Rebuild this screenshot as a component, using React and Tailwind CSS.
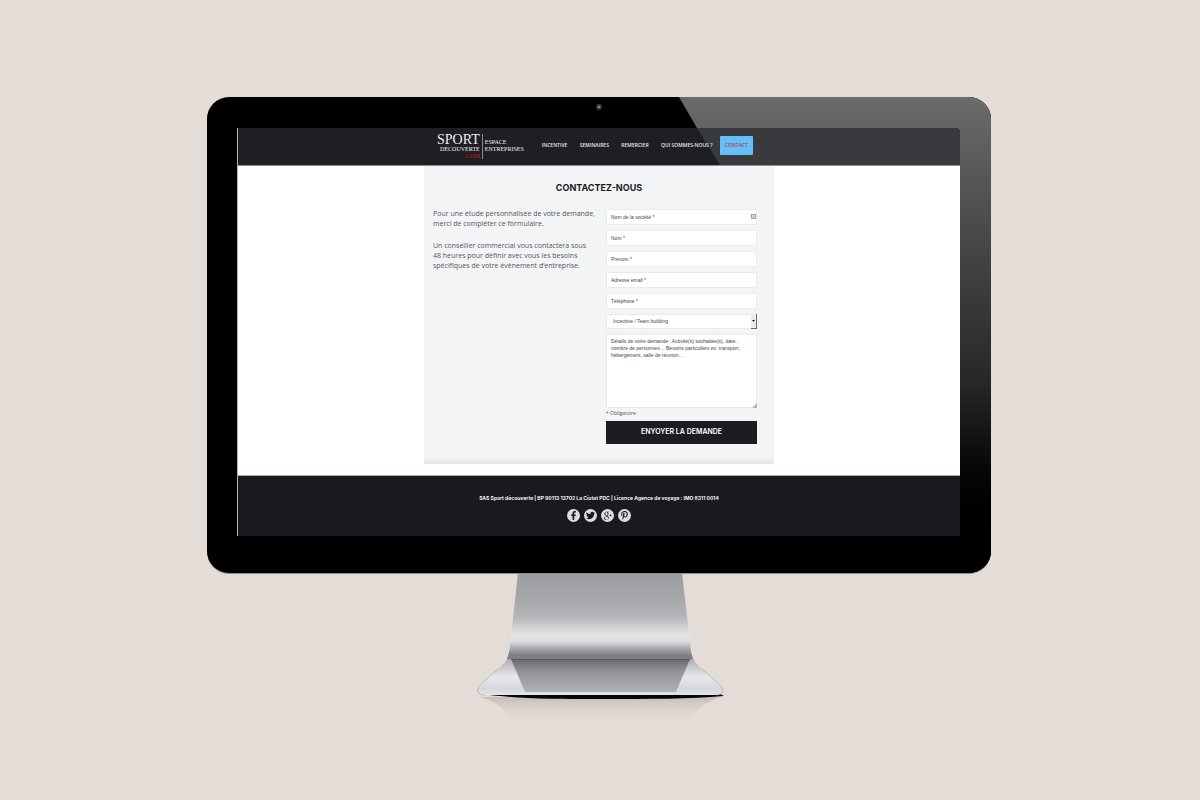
import { FaFacebookF, FaTwitter, FaPinterestP } from "react-icons/fa";
import { TiSocialGooglePlus } from "react-icons/ti";

const links = ["INCENTIVE", "SEMINAIRES", "REMERCIER", "QUI SOMMES-NOUS ?"];

const fields = [
  { id: "societe", label: "Nom de la société *", type: "text" },
  { id: "nom", label: "Nom *", type: "text" },
  { id: "prenom", label: "Prénom *", type: "text" },
  { id: "email", label: "Adresse email *", type: "email" },
  { id: "telephone", label: "Téléphone *", type: "tel" },
];

const socials = [
  { name: "Facebook", Icon: FaFacebookF, size: "size-[9px]" },
  { name: "Twitter", Icon: FaTwitter, size: "size-[9px]" },
  { name: "Google+", Icon: TiSocialGooglePlus, size: "size-[13px]" },
  { name: "Pinterest", Icon: FaPinterestP, size: "size-[9px]" },
];

function Logo() {
  return (
    <a href="#accueil" className="mt-0.5 flex items-start font-['Liberation_Serif',serif] text-[6px] leading-[7px] text-[#f0f0f2]">
      <span className="flex flex-col items-end border-r border-[#8b8c8f] pr-0.5">
        <span className="text-[14px] leading-[12px]">SPORT</span>
        <span>DECOUVERTE</span>
        <span className="leading-[6px] text-[#d4101c]">.COM</span>
      </span>
      <span className="flex flex-col pt-[5px] pl-0.5">
        <span>ESPACE</span>
        <span>ENTREPRISES</span>
      </span>
    </a>
  );
}

function Header() {
  return (
    <header className="relative flex h-[38px] items-center justify-center border-b border-[#8e8e90] bg-[#1e1f23] pb-0.5">
      <div className="absolute inset-y-0 right-0 w-[263px] bg-white/12 [clip-path:polygon(0_0,100%_0,100%_100%,23px_100%)]" />
      <div className="relative flex w-[350px] items-center gap-[18px] pr-[21px] pl-[13px]">
        <Logo />
        <nav className="flex flex-1 items-center justify-between text-[5px] font-semibold whitespace-nowrap text-[#e8e8ea]">
          {links.map((l) => (
            <a key={l} href="#page">{l}</a>
          ))}
          <a href="#contact" className="-ml-[5px] rounded-[1px] bg-[#64c0fa] px-[5px] leading-[19px] text-[#d22a48]">
            CONTACT
          </a>
        </nav>
      </div>
    </header>
  );
}

const box =
  "block w-full rounded-[1px] border border-[#e9eaec] bg-white px-1 font-['Liberation_Sans',Arial,sans-serif] text-[5px] text-[#444] outline-none placeholder:text-[#444] placeholder:opacity-100";

function ContactForm() {
  return (
    <form className="flex w-[151px] flex-col gap-[5px]">
      {fields.map((f, i) => (
        <div key={f.id} className="relative">
          <input id={f.id} type={f.type} placeholder={f.label} aria-label={f.label} className={`${box} h-4`} />
          {i === 0 && (
            <svg viewBox="0 0 10 10" className="absolute top-[5px] right-px size-[5px]">
              <rect x="1" y="1" width="8" height="8" fill="#eee" stroke="#888" strokeWidth="1.6" />
              <path d="M3 4h4M3 6.200h4" stroke="#888" strokeWidth="1.200" />
            </svg>
          )}
        </div>
      ))}
      <div className="relative">
        <select aria-label="Type de demande" className={`${box} h-[15px] appearance-none pl-1.5`}>
          <option>Incentive / Team building</option>
        </select>
        <span className="pointer-events-none absolute inset-y-0 right-0 flex w-1.5 items-center justify-center border-r border-b border-[#6b6b6b] bg-[#ececec]">
          <svg viewBox="0 0 6 4" className="h-[2px] w-[3px]">
            <path d="M0 0h6L3 4z" fill="#222" />
          </svg>
        </span>
      </div>
      <div className="relative">
        <textarea
          aria-label="Détails de votre demande"
          placeholder="Détails de votre demande : Activité(s) souhaitée(s), date, nombre de personnes… Besoins particuliers ex: transport, hébergement, salle de réunion…"
          className={`${box} h-[74px] resize-none py-[3px] leading-[7px]`}
        />
        <svg viewBox="0 0 5 5" className="pointer-events-none absolute right-0 bottom-0 size-[5px]">
          <path d="M5 0v5H0z" fill="#b4b4b6" />
        </svg>
      </div>
      <p className="-mt-[3px] text-[5px] leading-[7px] text-[#555]">* Obligatoire</p>
      <button type="submit" className="-mt-px h-[23px] bg-[#1c1d21] font-['Inter',sans-serif] text-[7px] font-semibold text-white">
        ENYOYER LA DEMANDE
      </button>
    </form>
  );
}

function Footer() {
  return (
    <footer className="flex flex-col items-center gap-1.5 border-t border-[#a5a5a5] bg-[#191a1d] pt-[18px] pb-[14px]">
      <p className="font-['Inter',sans-serif] text-[5px] leading-[9px] font-bold whitespace-nowrap text-[#f2f2f2]">
        SAS Sport découverte | BP 90113 13702 La Ciotat PDC | Licence Agence de voyage : IMO 8311 0014
      </p>
      <div className="flex gap-1">
        {socials.map(({ name, Icon, size }) => (
          <a key={name} href="#social" aria-label={name} className="flex size-[13px] items-center justify-center rounded-full bg-[#dededd] text-[#191a1d]">
            <Icon className={size} />
          </a>
        ))}
      </div>
    </footer>
  );
}

function Screen() {
  return (
    <div className="relative overflow-hidden rounded-tr-[2px] border-l border-[#b5b5b5] bg-white">
      <Header />
      <main className="mx-auto w-[350px] bg-[#f3f4f6] bg-linear-to-t from-[#e4e5e7] to-[#f3f4f6] to-[8px] px-[9px] pt-4 pb-5">
        <h1 className="text-center font-['Inter',sans-serif] text-[9px] leading-3 font-bold text-[#1b1c20]">
          CONTACTEZ-NOUS
        </h1>
        <div className="flex justify-between pt-[15px] pr-2">
          <div className="flex flex-col gap-3 text-[7px] leading-[10px] whitespace-nowrap text-[#55565a]">
            <p>
              Pour une étude personnalisée de votre demande,
              <br />
              merci de compléter ce formulaire.
            </p>
            <p>
              Un conseiller commercial vous contactera sous
              <br />
              48 heures pour définir avec vous les besoins
              <br />
              spécifiques de votre évènement d’entreprise.
            </p>
          </div>
          <ContactForm />
        </div>
      </main>
      <div className="h-[11px]" />
      <Footer />
    </div>
  );
}

function Stand() {
  return (
    <svg viewBox="469 573 260 155" className="h-[155px] w-[260px]" aria-hidden="true">
      <defs>
        <linearGradient id="neck" gradientUnits="userSpaceOnUse" x1="0" y1="573" x2="0" y2="695">
          <stop offset="0" stopColor="#9b9c9f" />
          <stop offset=".24" stopColor="#a8a9ac" />
          <stop offset=".36" stopColor="#b5b6b9" />
          <stop offset=".44" stopColor="#cdced0" />
          <stop offset=".51" stopColor="#e6e6e8" />
          <stop offset=".56" stopColor="#dededf" />
          <stop offset=".61" stopColor="#b0b1b4" />
          <stop offset=".67" stopColor="#818287" />
          <stop offset=".71" stopColor="#7b7c80" />
        </linearGradient>
        <linearGradient id="foot" gradientUnits="userSpaceOnUse" x1="0" y1="652" x2="0" y2="695">
          <stop offset="0" stopColor="#85868a" />
          <stop offset=".25" stopColor="#b9babe" />
          <stop offset=".58" stopColor="#e6e8ec" />
          <stop offset=".85" stopColor="#d5d7db" />
          <stop offset="1" stopColor="#e4e5e8" />
        </linearGradient>
        <linearGradient id="inset" x1="0" y1="0" x2="0" y2="1">
          <stop offset="0" stopColor="#66676a" />
          <stop offset=".35" stopColor="#919295" />
          <stop offset="1" stopColor="#b1b2b5" />
        </linearGradient>
        <linearGradient id="cast" x1="0" y1="0" x2="0" y2="1">
          <stop offset="0" stopColor="#c4bfb6" />
          <stop offset="1" stopColor="#e4ddd7" stopOpacity="0" />
        </linearGradient>
      </defs>
      <path d="M480 697C498 702 508 712 514 724H686C692 712 704 702 721 697Z" fill="url(#cast)" />
      <path d="M482 694C520 699 550 699 600 699S690 699 724 696L716 692Z" fill="#050506" />
      <path d="M511 650C509 659 504 664 498 669L480 685C476 689 477 695 485 695H716C724 695 724 690 721 686L702 669C696 664 692 659 690 650Z" fill="url(#foot)" />
      <path d="M498 669L480 685C476 689 477 695 485 695M716 695C724 695 724 690 721 686L702 669" fill="none" stroke="#8f9093" strokeWidth=".5" />
      <path d="M518 573H682L690.500 646Q691 654 693 659H507Q509 654 510 646Z" fill="url(#neck)" />
      <path d="M511 659H690L676 692H525Z" fill="url(#inset)" />
      <path d="M511 659.500H690" stroke="#59595c" />
    </svg>
  );
}

export default function App() {
  return (
    <div className="flex min-h-screen flex-col items-center bg-[#e4ddd7] pt-[97px] pr-0.5 font-['Open_Sans','Noto_Sans',sans-serif]">
      <div className="relative w-full max-w-[784px] overflow-hidden rounded-[22px] bg-black pt-[31px] pr-[31px] pb-[37px] pl-[30px] shadow-[0_1px_0_#8f8b86]">
        <div className="absolute inset-y-0 right-0 w-[312px] bg-linear-to-b from-[#6b6b6b] via-[#272727] via-60% to-black to-95% [clip-path:polygon(0_0,100%_0,100%_100%,275px_100%)]" />
        <svg viewBox="0 0 6 6" className="absolute top-[7px] left-1/2 size-1.5 -translate-x-1/2" aria-hidden="true">
          <circle cx="3" cy="3" r="3" fill="#3c3c3e" />
          <circle cx="3" cy="3" r="1" fill="#a5a5a8" />
        </svg>
        <Screen />
      </div>
      <Stand />
    </div>
  );
}
